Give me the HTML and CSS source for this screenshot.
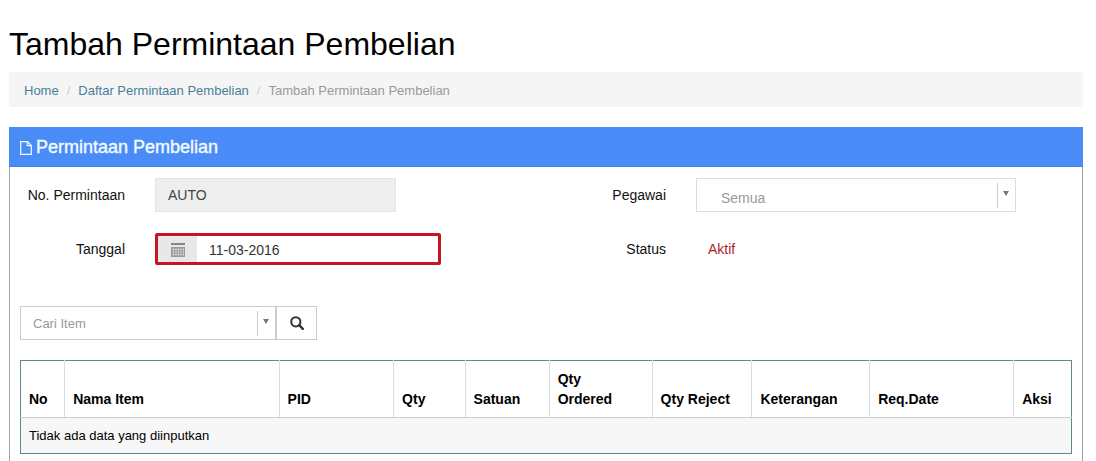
FILE: index.html
```html
<!DOCTYPE html>
<html lang="id">
<head>
<meta charset="utf-8">
<title>Tambah Permintaan Pembelian</title>
<link rel="stylesheet" href="styles.css">
</head>
<body>
<h1 class="page-title">Tambah Permintaan Pembelian</h1>
<nav aria-label="Breadcrumb">
  <ol class="breadcrumb">
    <li><a href="#">Home</a></li>
    <li><a href="#">Daftar Permintaan Pembelian</a></li>
    <li class="current" aria-current="page">Tambah Permintaan Pembelian</li>
  </ol>
</nav>
<section class="panel">
  <header class="panel-head">
    <svg class="icon-file" viewBox="0 0 12 14" aria-hidden="true"><path d="M.7 .7H7.500L11.300 4.500V13.300H.7ZM7.300 .7V4.700H11.300" fill="none" stroke="currentColor" stroke-width="1.200"/></svg>
    <h2 class="panel-title">Permintaan Pembelian</h2>
  </header>
  <div class="panel-body">
    <form class="fields">
      <label for="no">No. Permintaan</label>
      <input class="control number" id="no" type="text" value="AUTO" readonly>
      <label for="pegawai">Pegawai</label>
      <div class="select employee">
        <select id="pegawai"><option>Semua</option></select>
        <svg class="arrow" viewBox="0 0 6 5" aria-hidden="true"><path d="M0 0H6L3 5Z" fill="currentColor"/></svg>
      </div>
      <label for="tanggal">Tanggal</label>
      <div class="date">
        <span class="date-icon">
          <svg viewBox="0 0 14 14" aria-hidden="true"><path d="M0 0H14V2H0Z" fill="#858585"/><path d="M0 4H14V14H0Z" fill="#999"/><path d="M1 6.500H13M1 9H13M1 11.500H13M2.500 5V13M5 5V13M7.500 5V13M10 5V13M12.500 5V13" stroke="#d4d4d4" stroke-width=".7"/></svg>
        </span>
        <input id="tanggal" type="text" value="11-03-2016">
      </div>
      <span class="label">Status</span>
      <span class="status">Aktif</span>
    </form>
    <form class="search">
      <div class="select item">
        <select aria-label="Cari Item"><option>Cari Item</option></select>
        <svg class="arrow" viewBox="0 0 6 5" aria-hidden="true"><path d="M0 0H6L3 5Z" fill="currentColor"/></svg>
      </div>
      <button class="search-button" type="button" aria-label="Cari">
        <svg viewBox="0 0 14 14" aria-hidden="true"><circle cx="5.800" cy="5.800" r="4.600" fill="none" stroke="currentColor" stroke-width="2"/><path d="M9.200 9.200L12.800 12.800" stroke="currentColor" stroke-width="2.400" stroke-linecap="round"/></svg>
      </button>
    </form>
    <table class="items">
      <colgroup><col class="c-no"><col class="c-name"><col class="c-pid"><col class="c-qty"><col class="c-unit"><col class="c-ordered"><col class="c-reject"><col class="c-note"><col class="c-date"><col class="c-action"></colgroup>
      <thead>
        <tr><th>No</th><th>Nama Item</th><th>PID</th><th>Qty</th><th>Satuan</th><th>Qty Ordered</th><th>Qty Reject</th><th>Keterangan</th><th>Req.Date</th><th>Aksi</th></tr>
      </thead>
      <tbody>
        <tr><td colspan="10">Tidak ada data yang diinputkan</td></tr>
      </tbody>
    </table>
  </div>
</section>
</body>
</html>
```

FILE: styles.css
```css
* { box-sizing: border-box; }

body {
  display: flex;
  flex-direction: column;
  min-height: 100vh;
  margin: 0;
  padding: 24px 13px 0 9px;
  background: #fff;
  color: #111;
  font: 14px/20px "Liberation Sans", Arial, sans-serif;
}

input, select, button { font: inherit; color: inherit; }

.page-title {
  margin: 0 0 8px;
  color: #000;
  font-size: 32px;
  font-weight: 400;
  line-height: 40px;
}

.breadcrumb {
  display: flex;
  margin: 0 0 20px;
  padding: 9px 15px 7px;
  list-style: none;
  background: #f5f5f5;
  font-size: 13px;
  line-height: 19px;
}
.breadcrumb a { color: #477f99; text-decoration: none; }
.breadcrumb li + li::before { content: "/"; padding: 0 8px; color: #ccc; }
.breadcrumb .current { color: #999; }

.panel {
  flex: 1;
  border: 1px solid #8fa9b5;
  border-width: 0 1px;
}
.panel-head {
  display: flex;
  align-items: center;
  gap: 4px;
  height: 40px;
  margin: 0 -1px;
  padding: 0 11px;
  border-bottom: 1px solid #4a7fdc;
  background: #4a8cf7;
  color: #f0fbff;
}
.icon-file { width: 12px; height: 14px; margin-top: 3px; }
.panel-title { margin: 0; font-size: 18px; font-weight: 400; line-height: 20px; -webkit-text-stroke: 0.4px; }
.panel-body { padding: 11px 10px 8px; }

.fields {
  display: grid;
  grid-template-columns: 105px minmax(0, 1fr) 105px minmax(0, 1fr);
  grid-template-rows: 34px 34px;
  gap: 20px 30px;
  align-items: center;
  margin-bottom: 40px;
}
.fields label, .fields .label { text-align: right; }

.control {
  height: 34px;
  padding: 0 12px;
  border: 1px solid #e4e4e4;
  background: #eee;
}
.control.number { width: 64%; color: #444; }

.select { position: relative; height: 34px; }
.select select {
  width: 100%;
  height: 100%;
  padding: 2px 28px 0 12px;
  border: 1px solid #ccc;
  border-radius: 0;
  background: #fff;
  color: #999;
  appearance: none;
}
.select::after {
  content: "";
  position: absolute;
  top: 5px;
  right: 18px;
  bottom: 4px;
  border-left: 1px solid #ccc;
}
.arrow { position: absolute; top: 13px; right: 7px; width: 6px; height: 5px; color: #777; }
.employee { width: 85%; }
.employee select { padding: 6px 28px 0 24px; border-color: #ddd; }

.date {
  display: flex;
  width: 76%;
  height: 32px;
  border: 3px solid #c4161c;
  border-radius: 2px;
}
.date-icon {
  display: flex;
  flex: none;
  align-items: center;
  justify-content: center;
  width: 39px;
  padding-top: 2px;
  background: #e8e8e8;
}
.date-icon svg { width: 14px; height: 14px; }
.date input {
  flex: 1;
  min-width: 0;
  padding: 2px 12px 0;
  border: 0;
  background: #fff;
  color: #333;
}
.status { padding-left: 12px; color: #b31b2c; }

.search { display: flex; margin-bottom: 20px; }
.item { width: 256px; }
.item select { font-size: 13px; }
.search-button {
  display: flex;
  align-items: center;
  justify-content: center;
  width: 41px;
  height: 34px;
  padding: 0;
  border: 1px solid #ccc;
  background: #fff;
  color: #333;
}
.search-button svg { width: 14px; height: 14px; }

.items {
  width: 100%;
  table-layout: fixed;
  border-collapse: collapse;
  border: 1px solid #5f8a8b;
  font-size: 13px;
  color: #000;
}
.items th, .items td { padding: 8px; text-align: left; vertical-align: bottom; }
.items th {
  padding-right: 16px;
  border-left: 1px solid #ddd;
  border-bottom: 1px solid #ccc;
  font-size: 14px;
}
.items th:first-child { border-left-color: #5f8a8b; }
.items td { padding-bottom: 7px; background: #f7f7f7; }
.c-no { width: 4.2%; }
.c-name { width: 20.4%; }
.c-pid { width: 10.9%; }
.c-qty { width: 6.8%; }
.c-unit { width: 8%; }
.c-ordered { width: 9.8%; }
.c-reject { width: 9.5%; }
.c-note { width: 11.2%; }
.c-date { width: 13.7%; }
.c-action { width: 5.5%; }
```
